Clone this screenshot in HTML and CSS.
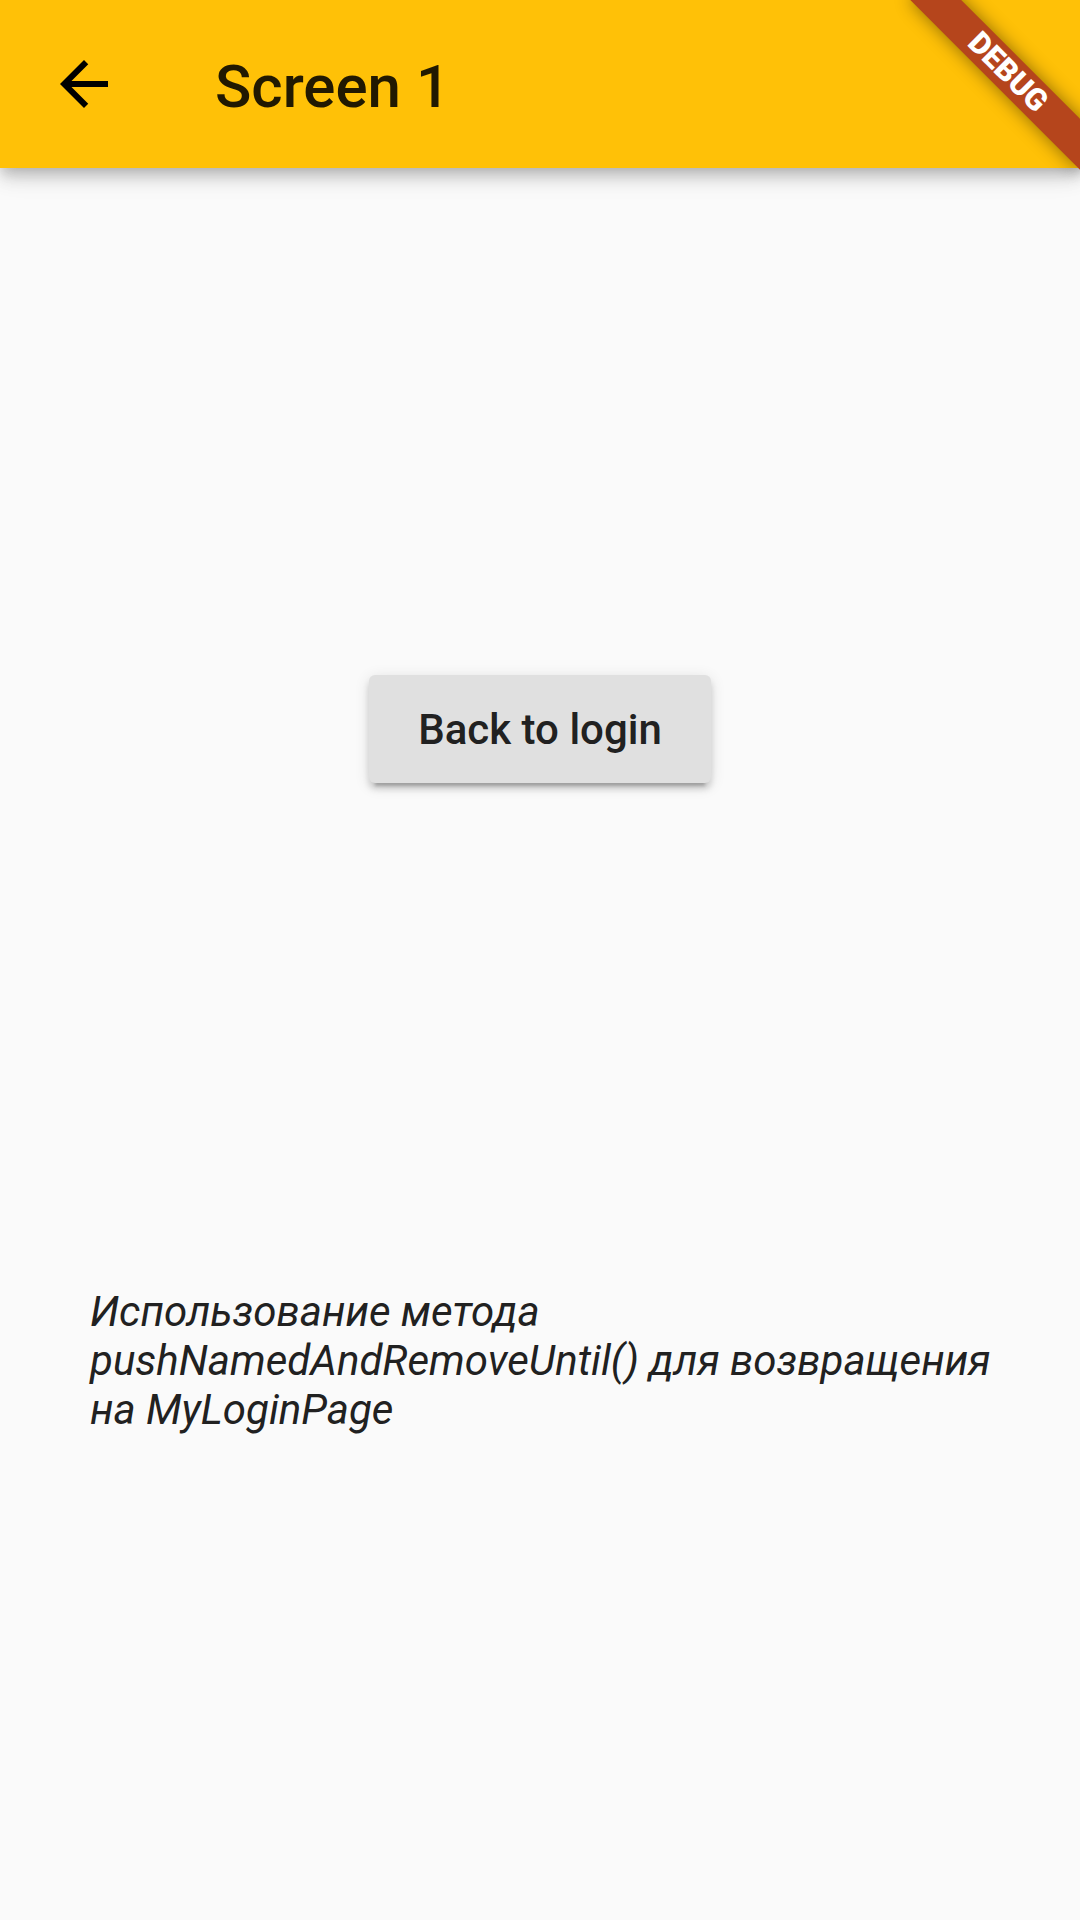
FILE: index.html
```html
<!DOCTYPE html>
<html lang="ru">
<head>
<meta charset="utf-8">
<title>Screen 1</title>
<link rel="stylesheet" href="styles.css">
</head>
<body>
<div class="app">
  <header class="appbar">
    <div class="leading">
      <svg class="back" viewBox="0 0 24 24" width="72" height="72"><path d="M20 11H7.83l5.59-5.59L12 4l-8 8 8 8 1.41-1.41L7.83 13H20v-2z" fill="#000"/></svg>
    </div>
    <h1 class="title">Screen 1</h1>
  </header>
  <main class="body">
    <button class="raised">Back to login</button>
    <p class="note">Использование метода pushNamedAndRemoveUntil() для возвращения на MyLoginPage</p>
  </main>
  <div class="banner-anchor"><div class="banner">DEBUG</div></div>
</div>
</body>
</html>
```

FILE: styles.css
```css
html, body {
  margin: 0;
  padding: 0;
  background: #fafafa;
}
.app {
  position: relative;
  width: 1080px;
  height: 1920px;
  overflow: hidden;
  background: #fafafa;
  font-family: Roboto, "Noto Sans", sans-serif;
}
.appbar {
  position: relative;
  z-index: 2;
  height: 168px;
  background: #ffc107;
  display: flex;
  align-items: center;
  box-shadow: 0 6px 12px -3px rgba(0,0,0,.18), 0 12px 15px 0 rgba(0,0,0,.1), 0 3px 30px 0 rgba(0,0,0,.1);
}
.leading {
  width: 168px;
  height: 168px;
  display: flex;
  align-items: center;
  justify-content: center;
  flex: none;
}
.back { display: block; }
.title {
  margin: 5px 0 0 47px;
  font-size: 60px;
  font-weight: 500;
  color: rgb(33,25,1);
  line-height: 1;
}
.body {
  display: flex;
  flex-direction: column;
  align-items: center;
  padding: 507px 0 0;
}
.raised {
  width: 342px;
  height: 108px;
  border: none;
  border-radius: 6px;
  background: #e0e0e0;
  color: #212121;
  font-family: Roboto, "Noto Sans", sans-serif;
  font-size: 42px;
  font-weight: 500;
  padding: 0;
  box-shadow: 0 9px 3px -6px rgba(0,0,0,.2), 0 6px 6px 0 rgba(0,0,0,.14), 0 3px 15px 0 rgba(0,0,0,.12);
}
.note {
  align-self: stretch;
  margin: 504px 50px 0 90px;
  font-size: 42px;
  font-style: italic;
  line-height: 49px;
  color: #212121;
}
.banner-anchor {
  position: absolute;
  left: 1080px;
  top: 0;
  width: 0;
  height: 0;
  transform-origin: 0 0;
  transform: rotate(45deg);
  z-index: 3;
}
.banner {
  position: absolute;
  left: -120px;
  top: 84px;
  width: 240px;
  height: 36px;
  background: #b5451c;
  color: #fff;
  font-family: Roboto, "Noto Sans", sans-serif;
  font-weight: 900;
  font-size: 30.6px;
  line-height: 36px;
  text-align: center;
  box-shadow: 0 0 18px rgba(0,0,0,.45);
}
```
